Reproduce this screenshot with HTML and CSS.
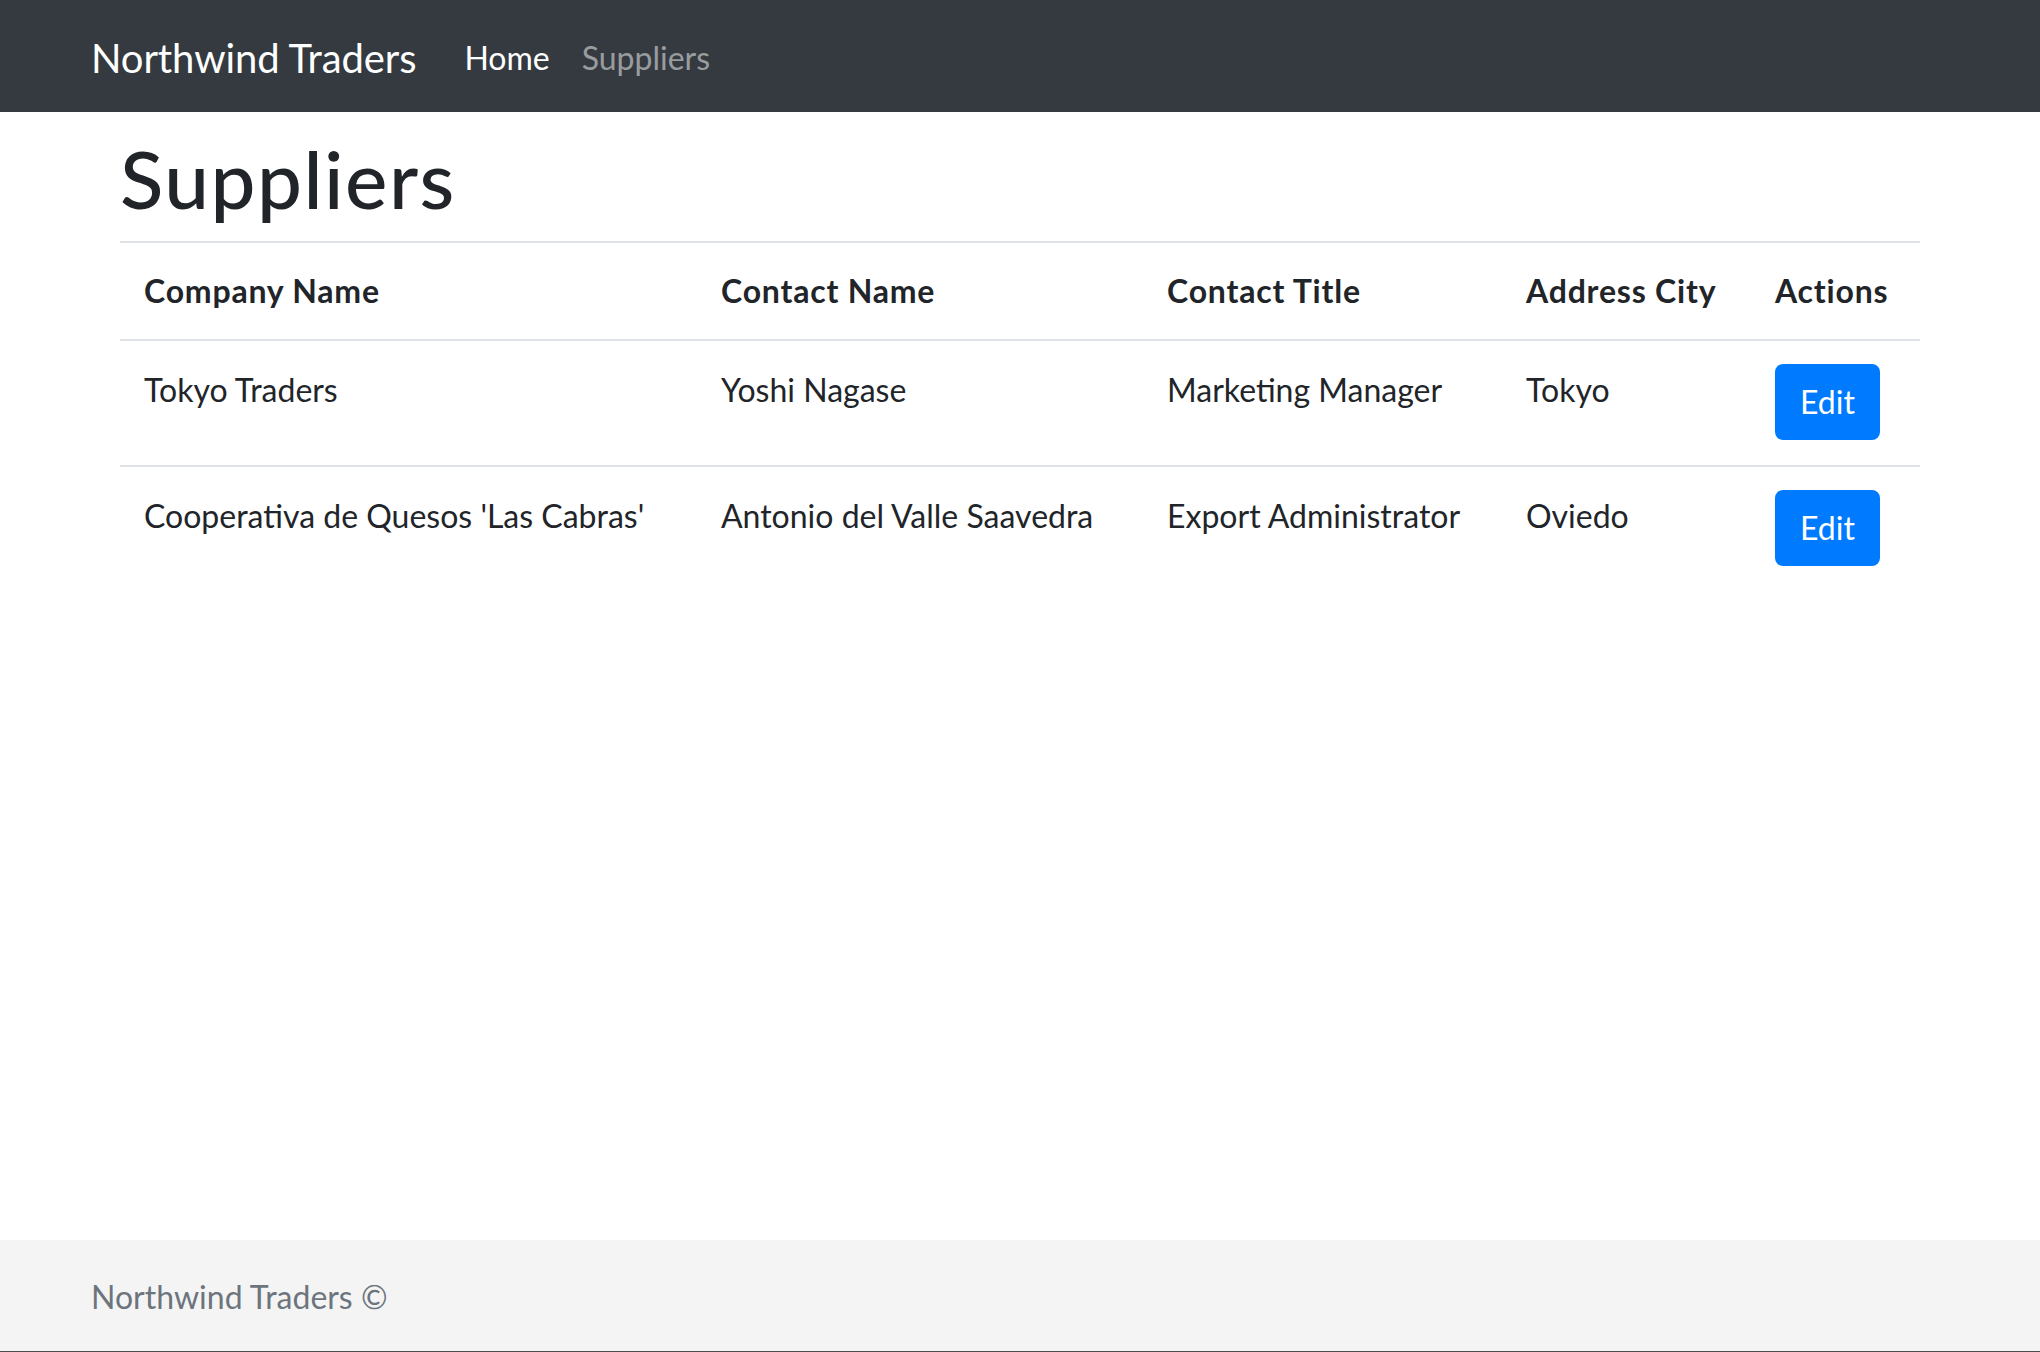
FILE: index.html
```html
<!DOCTYPE html>
<html lang="en">
<head>
<meta charset="utf-8">
<title>Suppliers - Northwind Traders</title>
<link rel="stylesheet" href="styles.css">
</head>
<body class="page">
  <header class="navbar">
    <a class="brand" href="#">Northwind Traders</a>
    <nav class="nav-links">
      <a class="nav-link nav-link-active" href="#">Home</a>
      <a class="nav-link nav-link-muted" href="#">Suppliers</a>
    </nav>
  </header>
  <main class="main">
    <h1 class="title">Suppliers</h1>
    <table class="table">
      <colgroup>
        <col class="col-company">
        <col class="col-contact">
        <col class="col-title">
        <col class="col-city">
        <col class="col-actions">
      </colgroup>
      <thead>
        <tr>
          <th>Company Name</th>
          <th>Contact Name</th>
          <th>Contact Title</th>
          <th>Address City</th>
          <th>Actions</th>
        </tr>
      </thead>
      <tbody>
        <tr>
          <td>Tokyo Traders</td>
          <td>Yoshi Nagase</td>
          <td>Marketing Manager</td>
          <td>Tokyo</td>
          <td><a class="btn" href="#">Edit</a></td>
        </tr>
        <tr>
          <td>Cooperativa de Quesos 'Las Cabras'</td>
          <td>Antonio del Valle Saavedra</td>
          <td>Export Administrator</td>
          <td>Oviedo</td>
          <td><a class="btn" href="#">Edit</a></td>
        </tr>
      </tbody>
    </table>
  </main>
  <footer class="footer">Northwind Traders ©</footer>
</body>
</html>
```

FILE: styles.css
```css
* { box-sizing: border-box; }

html, body { margin: 0; padding: 0; }

.page {
  min-height: 100vh;
  display: flex;
  flex-direction: column;
  font-family: "Lato", "Liberation Sans", sans-serif;
  font-size: 32px;
  line-height: 48px;
  color: #212529;
  background: #ffffff;
}

.navbar {
  height: 112px;
  background: #343a40;
  display: flex;
  align-items: center;
  padding: 3px 91px 0;
  flex: none;
}

.brand {
  font-size: 40px;
  line-height: 60px;
  color: #ffffff;
  text-decoration: none;
  margin-right: 32px;
  letter-spacing: -0.1px;
}

.nav-links {
  display: flex;
  align-items: center;
}

.nav-link {
  font-size: 32px;
  line-height: 48px;
  padding: 0 16px;
  text-decoration: none;
}

.nav-link-active { color: #ffffff; }
.nav-link-muted { color: rgba(255, 255, 255, 0.5); }

.main {
  flex: 1;
  padding: 0 120px;
}

.title {
  margin: 18px 0 15px;
  font-size: 80px;
  line-height: 96px;
  font-weight: 500;
  letter-spacing: 1.5px;
  color: #212529;
}

.table {
  width: 1800px;
  border-collapse: collapse;
  table-layout: fixed;
}

.col-company { width: 577px; }
.col-contact { width: 446px; }
.col-title { width: 359px; }
.col-city { width: 249px; }
.col-actions { width: 169px; }

.table th,
.table td {
  border-top: 2px solid #dee2e6;
  text-align: left;
  white-space: nowrap;
}

.table th {
  padding: 24px;
  font-weight: 700;
  vertical-align: bottom;
  border-bottom: 2px solid #dee2e6;
  letter-spacing: 0.8px;
}

.table td {
  padding: 25px 24px 23px;
  font-weight: 400;
  vertical-align: top;
}

.btn {
  display: inline-block;
  margin: -2px 0 2px;
  padding: 12px 23px;
  border: 2px solid #007bff;
  border-radius: 8px;
  background: #007bff;
  color: #ffffff;
  text-decoration: none;
  font-size: 32px;
  line-height: 48px;
}

.footer {
  flex: none;
  height: 112px;
  background: #f4f4f4;
  color: #6c757d;
  display: flex;
  align-items: center;
  padding: 3px 91px 0;
  font-size: 32px;
  border-bottom: 1px solid #4d4d4d;
}
```
